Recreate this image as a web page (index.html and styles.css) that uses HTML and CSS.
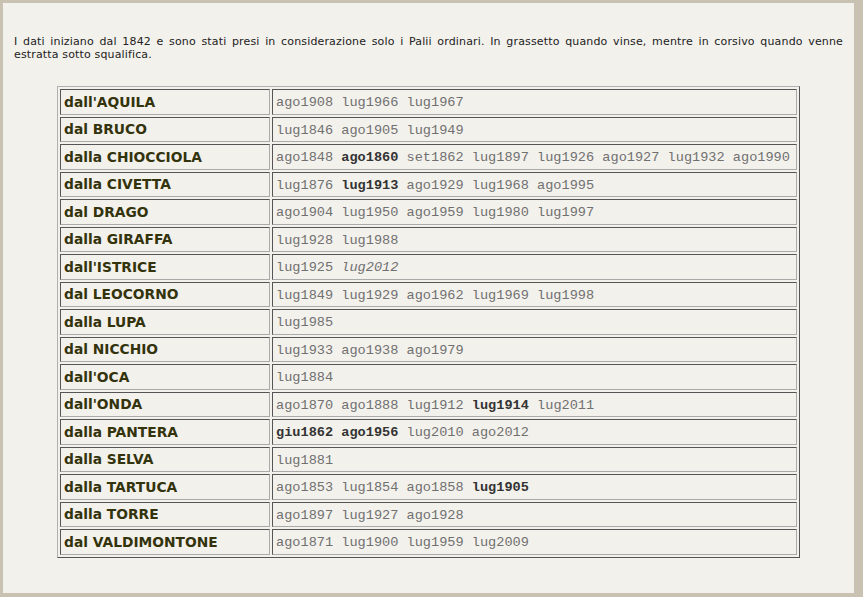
FILE: index.html
```html
<!DOCTYPE html>
<html lang="it">
<head>
<meta charset="utf-8">
<title>Palii</title>
<link rel="stylesheet" href="styles.css">
</head>
<body>
<div class="panel">
  <p class="intro">I dati iniziano dal 1842 e sono stati presi in considerazione solo i Palii ordinari. In grassetto quando vinse, mentre in corsivo quando venne estratta sotto squalifica.</p>
  <div class="wrap">
    <table class="palii">
      <tr><td class="name">dall'AQUILA</td><td class="dates">ago1908 lug1966 lug1967</td></tr>
      <tr><td class="name">dal BRUCO</td><td class="dates">lug1846 ago1905 lug1949</td></tr>
      <tr><td class="name">dalla CHIOCCIOLA</td><td class="dates">ago1848 <b>ago1860</b> set1862 lug1897 lug1926 ago1927 lug1932 ago1990</td></tr>
      <tr><td class="name">dalla CIVETTA</td><td class="dates">lug1876 <b>lug1913</b> ago1929 lug1968 ago1995</td></tr>
      <tr><td class="name">dal DRAGO</td><td class="dates">ago1904 lug1950 ago1959 lug1980 lug1997</td></tr>
      <tr><td class="name">dalla GIRAFFA</td><td class="dates">lug1928 lug1988</td></tr>
      <tr><td class="name">dall'ISTRICE</td><td class="dates">lug1925 <i>lug2012</i></td></tr>
      <tr><td class="name">dal LEOCORNO</td><td class="dates">lug1849 lug1929 ago1962 lug1969 lug1998</td></tr>
      <tr><td class="name">dalla LUPA</td><td class="dates">lug1985</td></tr>
      <tr><td class="name">dal NICCHIO</td><td class="dates">lug1933 ago1938 ago1979</td></tr>
      <tr><td class="name">dall'OCA</td><td class="dates">lug1884</td></tr>
      <tr><td class="name">dall'ONDA</td><td class="dates">ago1870 ago1888 lug1912 <b>lug1914</b> lug2011</td></tr>
      <tr><td class="name">dalla PANTERA</td><td class="dates"><b>giu1862</b> <b>ago1956</b> lug2010 ago2012</td></tr>
      <tr><td class="name">dalla SELVA</td><td class="dates">lug1881</td></tr>
      <tr><td class="name">dalla TARTUCA</td><td class="dates">ago1853 lug1854 ago1858 <b>lug1905</b></td></tr>
      <tr><td class="name">dalla TORRE</td><td class="dates">ago1897 lug1927 ago1928</td></tr>
      <tr><td class="name">dal VALDIMONTONE</td><td class="dates">ago1871 lug1900 lug1959 lug2009</td></tr>
    </table>
  </div>
</div>
</body>
</html>
```

FILE: styles.css
```css
html, body {
  margin: 0;
  padding: 0;
  height: 100%;
}
body {
  background: #c9c2b3;
  padding: 3px 9px 4px 3px;
  box-sizing: border-box;
}
.panel {
  background: #f3f1ec;
  height: 100%;
  box-sizing: border-box;
  padding: 32px 11px 0 11px;
}
.intro {
  margin: 0;
  font-family: "DejaVu Sans", Verdana, sans-serif;
  font-size: 11px;
  line-height: 13px;
  letter-spacing: 0.15px;
  color: #222;
  text-align: justify;
}
.wrap {
  padding: 25px 0 0 43px;
}
.palii {
  width: 743px;
  border: 1px solid;
  border-color: #b0b0b0 #555 #555 #b0b0b0;
  border-spacing: 2px;
  border-collapse: separate;
}
.palii td {
  border: 1px solid;
  border-color: #555 #aaa #aaa #555;
  height: 21.5px;
  padding: 0 3px;
  vertical-align: middle;
}
.palii td.name {
  width: 202px;
  font-family: "DejaVu Sans", Verdana, sans-serif;
  font-weight: bold;
  font-size: 13.8px;
  color: #33330c;
}
.palii td.dates {
  font-family: "Liberation Mono", "Courier New", monospace;
  font-size: 13.6px;
  color: #707070;
  padding-top: 2px;
}
.palii td.dates b {
  color: #333;
}
```
